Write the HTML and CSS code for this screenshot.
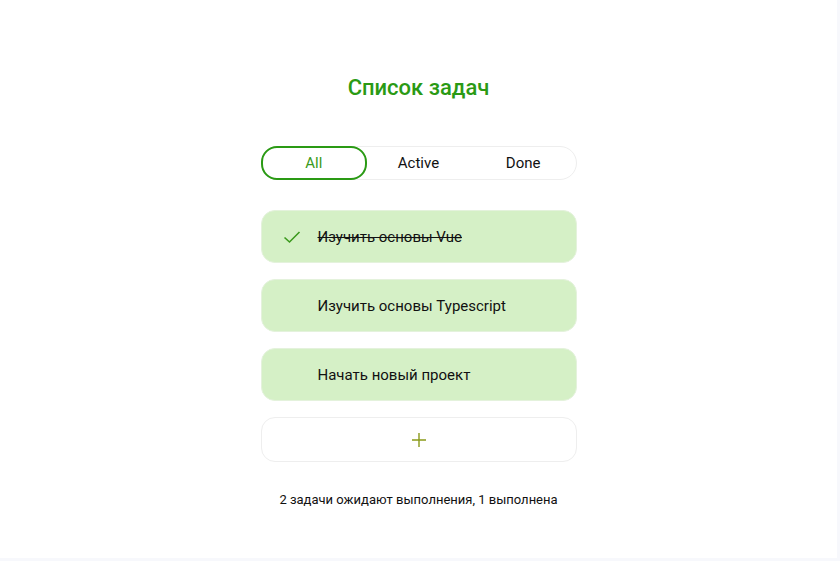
FILE: index.html
```html
<!DOCTYPE html>
<html lang="ru">
<head>
<meta charset="utf-8">
<title>Список задач</title>
<link rel="stylesheet" href="styles.css">
</head>
<body>
<div class="app">
  <h1 class="title">Список задач</h1>
  <div class="filters">
    <button class="filter active">All</button>
    <button class="filter">Active</button>
    <button class="filter">Done</button>
  </div>
  <ul class="tasks">
    <li class="task done">
      <span class="check">
        <svg width="18" height="14" viewBox="0 0 18 14"><path d="M1.5 7.5 L6.5 12 L16.5 2" fill="none" stroke="#3c9a1e" stroke-width="1.6"/></svg>
      </span>
      <span class="task-text">Изучить основы Vue</span>
    </li>
    <li class="task">
      <span class="check"></span>
      <span class="task-text">Изучить основы Typescript</span>
    </li>
    <li class="task">
      <span class="check"></span>
      <span class="task-text">Начать новый проект</span>
    </li>
  </ul>
  <button class="add">
    <svg width="16" height="16" viewBox="0 0 16 16"><path d="M8 1 V15 M1 8 H15" stroke="#8a9a1a" stroke-width="1.4" fill="none"/></svg>
  </button>
  <p class="summary">2 задачи ожидают выполнения, 1 выполнена</p>
</div>
</body>
</html>
```
FILE: styles.css
```css
* { box-sizing: border-box; }
html, body { margin: 0; padding: 0; }
body {
  background: #f7f8fc;
  font-family: Roboto, "Noto Sans", sans-serif;
  color: #111;
}
.app {
  width: 837px;
  height: 558px;
  background: #fff;
  display: flex;
  flex-direction: column;
  align-items: center;
  padding-top: 75px;
}
.title {
  margin: 0;
  font-size: 22px;
  font-weight: 500;
  color: #2a9a14;
  line-height: 26px;
}
.filters {
  margin-top: 45px;
  width: 316px;
  height: 34px;
  border: 1px solid #eeeeee;
  border-radius: 17px;
  display: grid;
  grid-template-columns: 1fr 1fr 1fr;
}
.filter {
  background: transparent;
  border: 2px solid transparent;
  border-radius: 16px;
  font-family: inherit;
  font-size: 15px;
  color: #111;
  margin: -1px;
  height: 34px;
  padding: 0;
  cursor: pointer;
}
.filter.active {
  border-color: #2a9a14;
  color: #3a9a20;
}
.tasks {
  list-style: none;
  margin: 30px 0 0;
  padding: 0;
  width: 316px;
  display: flex;
  flex-direction: column;
  gap: 16px;
}
.task {
  height: 53px;
  background: #d5f0c6;
  border: 1px solid #e4f2dc;
  border-radius: 14px;
  display: flex;
  align-items: center;
  padding-left: 21px;
  font-size: 15px;
}
.check {
  width: 18px;
  height: 14px;
  display: flex;
  margin-right: 17px;
}
.task.done .task-text {
  text-decoration: line-through;
}
.add {
  margin-top: 16px;
  width: 316px;
  height: 45px;
  background: #fff;
  border: 1px solid #eeeeee;
  border-radius: 14px;
  display: flex;
  align-items: center;
  justify-content: center;
  padding: 0;
  cursor: pointer;
}
.summary {
  margin: 30px 0 0;
  font-size: 13px;
  color: #111;
}
```
